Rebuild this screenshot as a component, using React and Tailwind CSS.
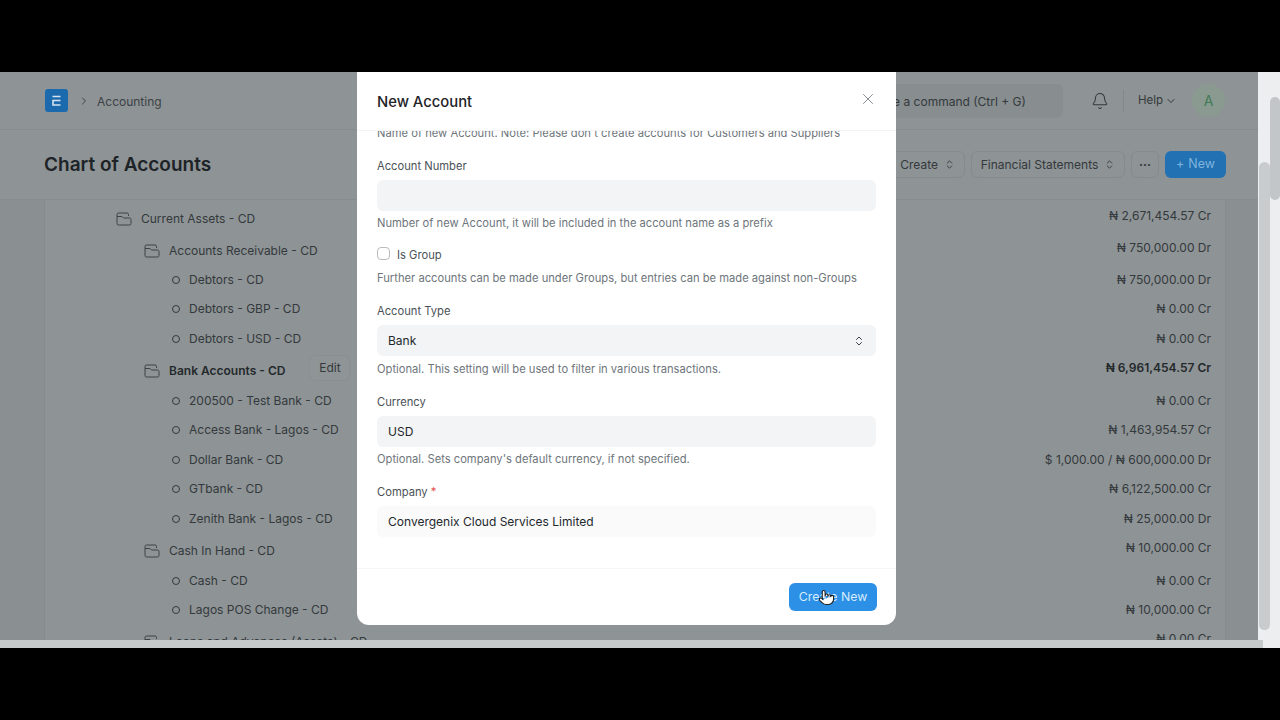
import React from "react";
import { ChevronRight, ChevronDown, ChevronsUpDown, Bell, X, Pointer } from "lucide-react";

const rows = [
  { type: "group", level: 1, name: "Current Assets - CD", amount: "₦ 2,671,454.57 Cr" },
  { type: "group", level: 2, short: true, name: "Accounts Receivable - CD", amount: "₦ 750,000.00 Dr" },
  { type: "leaf", name: "Debtors - CD", amount: "₦ 750,000.00 Dr" },
  { type: "leaf", name: "Debtors - GBP - CD", amount: "₦ 0.00 Cr" },
  { type: "leaf", name: "Debtors - USD - CD", amount: "₦ 0.00 Cr" },
  { type: "group", level: 2, name: "Bank Accounts - CD", amount: "₦ 6,961,454.57 Cr", active: true },
  { type: "leaf", name: "200500 - Test Bank - CD", amount: "₦ 0.00 Cr" },
  { type: "leaf", name: "Access Bank - Lagos - CD", amount: "₦ 1,463,954.57 Cr" },
  { type: "leaf", name: "Dollar Bank - CD", amount: "$ 1,000.00 / ₦ 600,000.00 Dr" },
  { type: "leaf", name: "GTbank - CD", amount: "₦ 6,122,500.00 Cr" },
  { type: "leaf", name: "Zenith Bank - Lagos - CD", amount: "₦ 25,000.00 Dr" },
  { type: "group", level: 2, name: "Cash In Hand - CD", amount: "₦ 10,000.00 Cr" },
  { type: "leaf", name: "Cash - CD", amount: "₦ 0.00 Cr" },
  { type: "leaf", name: "Lagos POS Change - CD", amount: "₦ 10,000.00 Cr" },
  { type: "group", level: 2, name: "Loans and Advances (Assets) - CD", amount: "₦ 0.00 Cr" },
];

const Folder = () => (
  <svg width="16" height="14" viewBox="0 0 16 14" fill="none" stroke="#3c4246" strokeWidth="1" className="shrink-0">
    <path d="M1 4.500V2.500A1.500 1.500 0 0 1 2.500 1h8.500A1.500 1.500 0 0 1 12.500 2.500V4" />
    <path d="M1 4.500h5l1.500 1.500h6A1.500 1.500 0 0 1 15 7.500v4A1.500 1.500 0 0 1 13.500 13h-11A1.500 1.500 0 0 1 1 11.500z" />
  </svg>
);

const TreeRow = ({ row }) => {
  if (row.type === "leaf") {
    return (
      <div className="flex h-[29.6px] items-center justify-between pl-[127px] pr-[14px]">
        <div className="flex items-center gap-[9px]">
          <span className="h-2 w-2 rounded-full border border-[#33393c]" />
          <span>{row.name}</span>
        </div>
        <span>{row.amount}</span>
      </div>
    );
  }
  return (
    <div className={`flex shrink-0 items-center justify-between pr-[14px] ${row.short ? "h-[31px]" : "h-8"} ${row.level === 1 ? "pl-[71px]" : "pl-[99px]"}`}>
      <div className="flex items-center gap-[9px] pt-[2px]">
        <Folder />
        <span className={row.active ? "font-semibold text-[#24292c]" : ""}>{row.name}</span>
        {row.active && (
          <span className="ml-[15px] -mt-[5px] flex h-[26px] w-[41px] items-center justify-center rounded-md border border-[#8a8f91] bg-[#8f9496] text-[#33393c]">
            Edit
          </span>
        )}
      </div>
      <span className={`pb-[4px] ${row.active ? "font-semibold text-[#24292c]" : ""}`}>{row.amount}</span>
    </div>
  );
};

const Label = ({ children }) => <div className="mb-[5px] h-[18px] text-[11.2px] leading-[18px] text-[#4a5157]">{children}</div>;

const Help = ({ children, gap = "mt-[3px]" }) => <div className={`h-[18px] text-[11.2px] leading-[18px] text-[#6e757b] ${gap}`}>{children}</div>;

const Field = ({ label, value, help, light, select, required }) => (
  <div className="mt-[15px]">
    <Label>
      {label}
      {required && <span className="text-[#e24c4c]"> *</span>}
    </Label>
    <div className={`flex h-[31px] items-center justify-between rounded-md px-[11px] text-xs text-[#22282c] ${light ? "bg-[#fafafa]" : "bg-[#f3f4f5]"}`}>
      <span>{value}</span>
      {select && <ChevronsUpDown size={12} className="text-[#3c4246]" />}
    </div>
    {help && <Help gap={select ? "mt-[4px]" : "mt-[3px]"}>{help}</Help>}
  </div>
);

export default function App() {
  return (
    <div className="flex h-[720px] w-[1280px] flex-col overflow-hidden bg-black [font-family:Inter,sans-serif]">
      <div className="h-[72px] shrink-0" />
      <div className="relative flex h-[576px] shrink-0">
        <div className="flex w-[1258px] flex-col bg-[#8e9395]">
          {/* navbar */}
          <div className="flex h-[58px] shrink-0 items-center border-b border-[#878c8e] pl-[45px] pr-[33px]">
            <svg width="23" height="23" viewBox="0 0 23 23" className="shrink-0">
              <rect width="23" height="23" rx="3" fill="#1b6aad" />
              <path d="M7.500 7.500h8M15.500 11.500H8v4.500h7.500" fill="none" stroke="#d5e3ee" strokeWidth="1.600" />
            </svg>
            <ChevronRight size={12} className="ml-[10px] text-[#3c4246]" />
            <span className="ml-[7px] pt-[2px] text-xs text-[#3c4246]">Accounting</span>
            <div className="ml-auto flex h-[34px] w-[300px] items-center justify-end rounded-md bg-[#888d8f] pr-[37px] pt-[2px] text-xs text-[#33393c]">
              Search or type a command (Ctrl + G)
            </div>
            <Bell size={18} strokeWidth={1.4} className="ml-[28px] text-[#33393c]" />
            <div className="ml-[14px] h-[22px] w-px bg-[#82878a]" />
            <span className="ml-[14px] text-[11.5px] text-[#33393c]">Help</span>
            <ChevronDown size={12} className="ml-[2px] text-[#33393c]" />
            <div className="ml-[15px] flex h-[33px] w-[33px] items-center justify-center rounded-full bg-[#8a9a90] text-sm text-[#3f7a55]">A</div>
          </div>
          {/* page head */}
          <div className="flex h-[70px] shrink-0 items-center border-b border-[#878c8e] pl-[44px] pr-[32px]">
            <h1 className="pt-[2px] text-[19px] font-semibold text-[#1d2327]">Chart of Accounts</h1>
            <div className="ml-auto flex items-center gap-[6px] text-xs text-[#33393c]">
              <div className="flex h-[27px] items-center gap-[6px] rounded-md border border-[#858a8c] pl-4 pr-[9px]">
                Create <ChevronsUpDown size={11} />
              </div>
              <div className="flex h-[27px] w-[154px] items-center justify-center gap-[6px] rounded-md border border-[#858a8c]">
                Financial Statements <ChevronsUpDown size={11} />
              </div>
              <div className="flex h-[27px] w-[28px] items-center justify-center rounded-md border border-[#858a8c] pb-[5px] font-bold">
                ...
              </div>
              <div className="flex h-[27px] w-[61px] items-center justify-center gap-1 rounded-md bg-[#2171b3] text-[12.5px] text-[#7fb4dc]">
                <span>+</span> New
              </div>
            </div>
          </div>
          {/* tree */}
          <div className="flex-1 overflow-hidden bg-[#8a8f91] pl-[44px] pr-[32px]">
            <div className="h-full overflow-hidden border-x border-[#858a8c] bg-[#8e9395] pt-[2px] text-xs text-[#33393c]">
              {rows.map((row) => (
                <TreeRow key={row.name} row={row} />
              ))}
            </div>
          </div>
          <div className="h-2 shrink-0 bg-[#c6cacb]" />
        </div>
        {/* page scrollbars */}
        <div className="relative flex-1 bg-[#eceeef]">
          <div className="absolute left-[12px] top-[25px] h-[103px] w-[10px] rounded-full bg-[#c2c6c8]" />
          <div className="absolute left-[1px] top-[90px] h-[468px] w-[11px] rounded-full bg-[#c8cccd]" />
          <div className="absolute bottom-0 left-0 h-2 w-[5px] bg-[#c6cacb]" />
        </div>
        {/* dialog */}
        <div className="absolute left-[357px] top-0 flex h-[553px] w-[539px] flex-col rounded-b-xl bg-white">
          <div className="flex h-[59px] shrink-0 items-center justify-between border-b border-[#f3f3f3] pl-[20px] pr-[19px]">
            <h2 className="pt-[3px] text-[14.8px] font-medium text-[#1d2327]">New Account</h2>
            <X size={18} strokeWidth={1.2} className="-mt-[5px] text-[#7c8388]" />
          </div>
          <div className="flex-1 overflow-hidden px-[20px]">
            <div className="-mt-[10px]">
              <Help>Name of new Account. Note: Please don't create accounts for Customers and Suppliers</Help>
              <Field label="Account Number" value="" help="Number of new Account, it will be included in the account name as a prefix" />
              <div className="mt-[14px] flex h-[18px] items-center gap-[7px] text-[11.2px] text-[#4a5157]">
                <span className="-mt-[3px] h-[13px] w-[13px] rounded-[4px] border border-[#b9bdc0] bg-white" />
                Is Group
              </div>
              <div className="pt-[2px]">
                <Help>Further accounts can be made under Groups, but entries can be made against non-Groups</Help>
              </div>
              <Field label="Account Type" value="Bank" select help="Optional. This setting will be used to filter in various transactions." />
              <Field label="Currency" value="USD" help="Optional. Sets company's default currency, if not specified." />
              <Field label="Company" required light value="Convergenix Cloud Services Limited" />
            </div>
          </div>
          <div className="flex h-[57px] shrink-0 items-center justify-end border-t border-[#f5f5f5] pr-[19px]">
            <div className="relative flex h-[28px] w-[88px] items-center justify-center rounded-md bg-[#2b90e6] text-[12.3px] text-[#d6ebfb]">
              Create New
              <Pointer size={17} fill="white" stroke="#1c1c1c" strokeWidth={1.5} className="absolute left-[29px] top-[6px]" />
            </div>
          </div>
        </div>
      </div>
    </div>
  );
}
